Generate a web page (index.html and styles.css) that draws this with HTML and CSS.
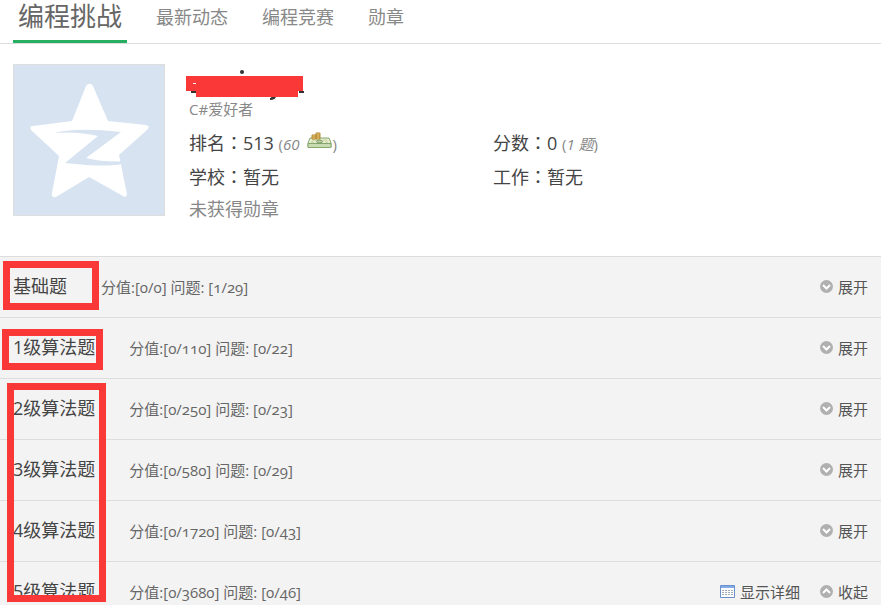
FILE: index.html
```html
<!DOCTYPE html>
<html lang="zh-CN">
<head>
    <meta charset="UTF-8">
    <meta name="viewport" content="width=device-width, initial-scale=1.0">
    <title>编程挑战</title>
    <link rel="stylesheet" href="styles.css">
</head>
<body>
    <nav class="tabs">
        <a class="tab active" href="#">编程挑战</a>
        <a class="tab" href="#">最新动态</a>
        <a class="tab" href="#">编程竞赛</a>
        <a class="tab" href="#">勋章</a>
    </nav>

    <section class="profile">
        <svg class="avatar" viewBox="0 0 150 150">
            <path d="M75 19Q77 18 79 21L94 56L132 60Q137 61 133 65L105 90L113 129Q113 133 109 131L75 112L42 132Q37 133 38 128L45 91L17 65Q15 61 19 61L58 56L72 21Q73 19 75 19Z" fill="#fff"/>
            <path d="M40 68Q64 62 107 67L72 93Q92 98 115 96Q104 104 51 98L84 71Q63 66 40 68Z" fill="#d7e3f1"/>
        </svg>
        <div class="info">
            <svg class="name" width="120" height="32" viewBox="0 0 120 32">
                <circle cx="57" cy="4" r="2" fill="#333"/>
                <path d="M6 23h6v2h-6zM114 23h5v2h-5zM86 28h5q0 4-6 4v-2q2 0 1-2z" fill="#333"/>
                <path d="M1 8h117v15h-5v6h-102v-6h-10z" fill="#fb3838"/>
                <path d="M8 15h3v1h-3z" fill="#fff"/>
            </svg>
            <p class="motto">C#爱好者</p>
            <div class="facts">
                <p>排名<span class="colon" lang="zh-TW">：</span>513 <span class="note">(<em>60</em>
                    <svg class="money" width="25" height="17" viewBox="0 0 25 17">
                        <path d="M3 6h19l2 5v4H1v-4z" fill="#e9edcf" stroke="#85a66f"/>
                        <path d="M1 11.500h23v4H1z" fill="#c9dcb1" stroke="#85a66f"/>
                        <path d="M5 8h4M16 8h4M4 10h3M18 10h3" stroke="#c0cc96"/>
                        <ellipse cx="12.500" cy="9.500" rx="3" ry="1.500" fill="#b8d09e" stroke="#799865"/>
                        <path d="M5 3h4v4h-4zM9 1h4v6h-4z" fill="#efce76" stroke="#b58936"/>
                        <path d="M5 5h4M9 3h4M9 5h4" stroke="#b58936"/>
                    </svg>)</span></p>
                <p>分数<span class="colon" lang="zh-TW">：</span>0 <span class="note">(<em>1 题</em>)</span></p>
                <p>学校<span class="colon" lang="zh-TW">：</span>暂无</p>
                <p>工作<span class="colon" lang="zh-TW">：</span>暂无</p>
            </div>
            <p class="medals">未获得勋章</p>
        </div>
    </section>

    <main class="levels">
        <div class="level">
            <h2>基础题</h2>
            <span class="score">分值:[0/0] 问题: [1/29]</span>
            <button class="toggle"><svg class="arrow" viewBox="0 0 13 13"><circle cx="6.500" cy="6.500" r="6.500"/><path d="M3 5l3.500 3.500l3.500-3.500"/></svg>展开</button>
        </div>
        <div class="level">
            <h2>1级算法题</h2>
            <span class="score">分值:[0/110] 问题: [0/22]</span>
            <button class="toggle"><svg class="arrow" viewBox="0 0 13 13"><circle cx="6.500" cy="6.500" r="6.500"/><path d="M3 5l3.500 3.500l3.500-3.500"/></svg>展开</button>
        </div>
        <div class="level">
            <h2>2级算法题</h2>
            <span class="score">分值:[0/250] 问题: [0/23]</span>
            <button class="toggle"><svg class="arrow" viewBox="0 0 13 13"><circle cx="6.500" cy="6.500" r="6.500"/><path d="M3 5l3.500 3.500l3.500-3.500"/></svg>展开</button>
        </div>
        <div class="level">
            <h2>3级算法题</h2>
            <span class="score">分值:[0/580] 问题: [0/29]</span>
            <button class="toggle"><svg class="arrow" viewBox="0 0 13 13"><circle cx="6.500" cy="6.500" r="6.500"/><path d="M3 5l3.500 3.500l3.500-3.500"/></svg>展开</button>
        </div>
        <div class="level">
            <h2>4级算法题</h2>
            <span class="score">分值:[0/1720] 问题: [0/43]</span>
            <button class="toggle"><svg class="arrow" viewBox="0 0 13 13"><circle cx="6.500" cy="6.500" r="6.500"/><path d="M3 5l3.500 3.500l3.500-3.500"/></svg>展开</button>
        </div>
        <div class="level">
            <h2>5级算法题</h2>
            <span class="score">分值:[0/3680] 问题: [0/46]</span>
            <button class="toggle">
                <svg class="sheet" viewBox="0 0 15 13">
                    <path d="M.5 .5h14v12h-14z" fill="#fff" stroke="#6b8fcb"/>
                    <path d="M1 1h13v2h-13z" fill="#82abe8"/>
                    <path d="M2 5.500h11M2 7.500h11M2 9.500h11" stroke="#a3abb7" stroke-dasharray="2 1"/>
                </svg>显示详细</button>
            <button class="toggle"><svg class="arrow" viewBox="0 0 13 13"><circle cx="6.500" cy="6.500" r="6.500"/><path d="M3 8l3.500-3.500l3.500 3.500"/></svg>收起</button>
        </div>
        <!-- red marker frames over the level titles -->
        <div class="mark mark-basic"></div>
        <div class="mark mark-first"></div>
        <div class="mark mark-rest"></div>
    </main>
</body>
</html>
```
FILE: styles.css
```css
* {
    box-sizing: border-box;
}
body {
    margin: 0;
    height: 100vh;
    overflow: hidden;
    background-color: #ffffff;
    color: #444444;
    font-family: "Open Sans", "Noto Sans CJK SC", sans-serif;
    font-size: 18px;
}
p, h2 {
    margin: 0;
    font-weight: 400;
}
.tabs {
    display: flex;
    gap: 24px;
    height: 44px;
    padding: 0 13px;
    border-bottom: 1px solid #dddddd;
}
.tab {
    padding: 0 5px;
    color: #888888;
    font-size: 18px;
    line-height: 34px;
    text-decoration: none;
}
.tab.active {
    color: #666666;
    font-size: 26px;
    line-height: 32px;
    border-bottom: 3px solid #27ae60;
}
.profile {
    display: flex;
    gap: 24px;
    padding: 20px 13px 32px;
}
.avatar {
    flex: none;
    width: 152px;
    height: 152px;
    background-color: #d7e3f1;
    border: 1px solid #dddddd;
}
.info {
    flex: 1;
    padding-top: 4px;
}
.name {
    display: block;
    margin: 0 -4px;
}
.motto {
    color: #888888;
    font-size: 15px;
    line-height: 18px;
}
.facts {
    display: grid;
    grid-template-columns: repeat(2, minmax(0, 304px));
    grid-auto-rows: 34px;
    padding-top: 8px;
    line-height: 34px;
}
.colon {
    font-family: "Noto Sans CJK TC", sans-serif;
    line-height: 1;
}
.note {
    color: #888888;
    font-size: 15px;
    line-height: 1;
}
.money {
    margin-left: 4px;
    vertical-align: 1px;
}
.medals {
    color: #888888;
    line-height: 30px;
}
.levels {
    position: relative;
    background-color: #f3f3f3;
}
.level {
    display: flex;
    align-items: baseline;
    height: 61px;
    padding: 0 13px;
    border-top: 1px solid #dddddd;
    line-height: 58px;
}
.level h2 {
    margin-right: 34px;
    font-size: 18px;
}
.score {
    margin-right: auto;
    color: #666666;
    font-size: 15px;
    font-variant-numeric: oldstyle-nums;
}
.toggle {
    display: flex;
    align-items: center;
    gap: 5px;
    margin-left: 20px;
    padding: 0;
    border: none;
    background-color: transparent;
    color: #555555;
    font-family: inherit;
    font-size: 15px;
    cursor: pointer;
}
.arrow {
    width: 13px;
    height: 13px;
}
.arrow circle {
    fill: #b0b0b0;
}
.arrow path {
    fill: none;
    stroke: #ffffff;
    stroke-width: 2;
}
.sheet {
    width: 15px;
    height: 13px;
}
/* marker frames */
.mark {
    position: absolute;
    border: 7px solid #fb3838;
}
.mark-basic {
    top: 5px;
    left: 3px;
    width: 96px;
    height: 49px;
}
.mark-first {
    top: 73px;
    left: 2px;
    width: 101px;
    height: 41px;
}
.mark-rest {
    top: 127px;
    left: 7px;
    width: 99px;
    height: 219px;
}
```
